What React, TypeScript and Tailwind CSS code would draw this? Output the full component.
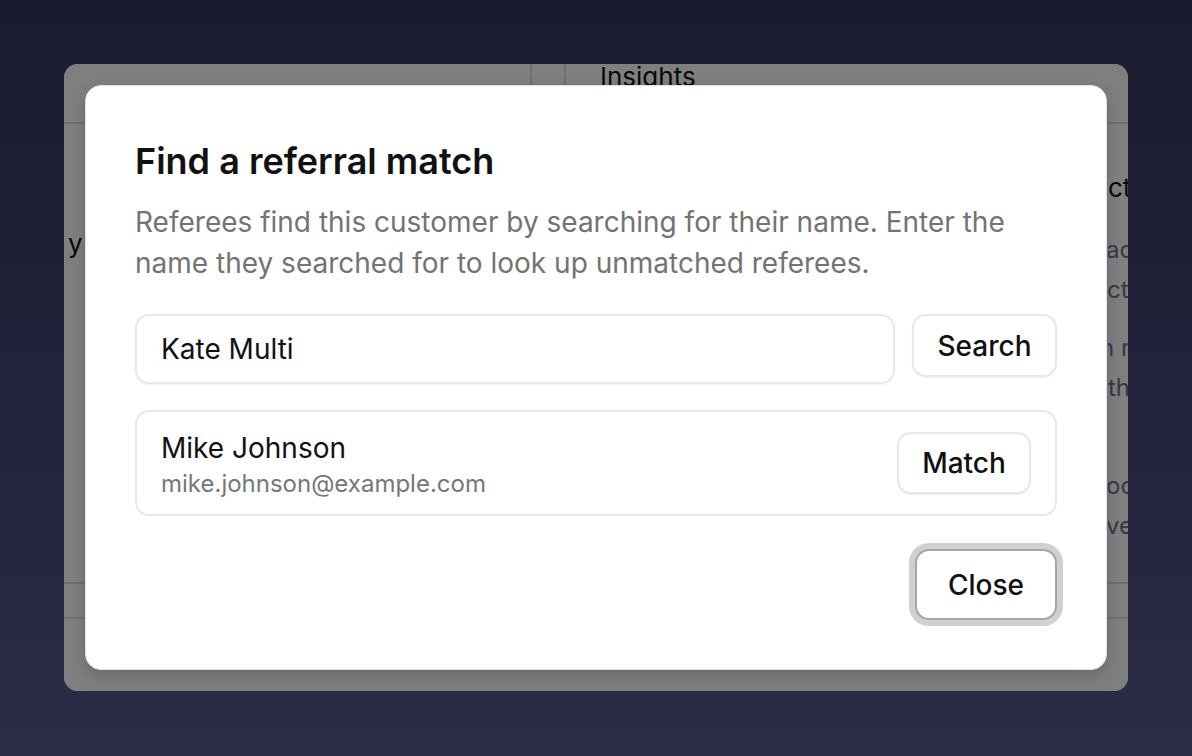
import React from "react";

export default function App() {
  const font = { fontFamily: "Inter, 'Noto Sans', sans-serif" };
  return (
    <div
      className="w-[1192px] h-[756px] p-[64px] bg-[linear-gradient(180deg,#1b1b2f_0%,#22233a_50%,#2b2c45_100%)]"
      style={font}
    >
      <div className="relative w-[1064px] h-[627px] rounded-[14px] overflow-hidden bg-white flex flex-col">
        {/* background app */}
        <div className="h-[60px] flex border-b-2 border-[#dedede] shrink-0">
          <div className="w-[468px] border-r-2 border-[#dedede]" />
          <div className="w-[34px] border-r-2 border-[#dedede]" />
          <div className="pl-[34px] text-[26px] text-[#111] leading-[26px]">Insights</div>
        </div>
        <div className="h-[458px] flex shrink-0">
          <div className="w-[1044px] pl-[4px] pt-[104px] text-[26px] text-[#111] leading-[32px]">y</div>
          <div className="flex-1 min-w-0 overflow-hidden whitespace-nowrap pt-[48px]">
            <div className="text-[26px] text-[#111] leading-[32px]">ctions</div>
            <div className="mt-[26px] text-[24px] text-[#70708f] leading-[40px] -ml-[2px]">account</div>
            <div className="text-[24px] text-[#70708f] leading-[40px] -ml-[1px]">ctive</div>
            <div className="mt-[18px] text-[24px] text-[#70708f] leading-[40px] -ml-[8px]">n referral</div>
            <div className="text-[24px] text-[#70708f] leading-[40px]">this</div>
            <div className="mt-[58px] text-[24px] text-[#70708f] leading-[40px] -ml-[2px]">ocess</div>
            <div className="text-[24px] text-[#70708f] leading-[40px] -ml-[2px]">verify</div>
          </div>
        </div>
        <div className="h-[35px] border-t-2 border-[#dedede] shrink-0" />
        <div className="flex-1 border-t-2 border-[#dedede]" />

        {/* overlay */}
        <div className="absolute inset-0 bg-black/50 p-[21px]">
          <div className="w-full h-full bg-white rounded-[16px] border border-[#e2e2e2] shadow-[0_6px_16px_rgba(0,0,0,0.18)] px-[49px] pt-[53px] pb-[49px] flex flex-col">
            <h2 className="text-[36px] font-semibold leading-[44px] text-[#111]">
              Find a referral match
            </h2>
            <p className="mt-[19px] text-[28px] leading-[41px] text-[#737373]">
              Referees find this customer by searching for their name. Enter the name they searched for to look up unmatched referees.
            </p>
            <div className="mt-[30px] flex gap-[17px] items-start">
              <div className="flex-1 h-[70px] rounded-[14px] border-2 border-[#e8e8e8] shadow-[0_1px_2px_rgba(0,0,0,0.06)] flex items-center px-[24px] text-[28px] text-[#111]">
                Kate Multi
              </div>
              <button className="w-[145px] h-[63px] rounded-[14px] border-2 border-[#e8e8e8] shadow-[0_1px_2px_rgba(0,0,0,0.06)] bg-white text-[28px] text-[#111] font-medium">
                Search
              </button>
            </div>
            <div className="mt-[26px] h-[106px] rounded-[14px] border-2 border-[#e8e8e8] flex items-center justify-between pl-[24px] pr-[24px]">
              <div className="flex flex-col pt-[4px]">
                <span className="text-[28px] leading-[36px] text-[#111]">Mike Johnson</span>
                <span className="mt-[2px] text-[24px] leading-[32px] text-[#777]">mike.johnson@example.com</span>
              </div>
              <button className="w-[134px] h-[62px] rounded-[14px] border-2 border-[#e8e8e8] shadow-[0_1px_2px_rgba(0,0,0,0.06)] bg-white text-[28px] text-[#111] font-medium">
                Match
              </button>
            </div>
            <div className="mt-[33px] flex justify-end">
              <button className="w-[142px] h-[71px] rounded-[14px] border-2 border-[#a6a6a6] ring-[6px] ring-[#d0d0d0] bg-white text-[28px] text-[#111] font-medium">
                Close
              </button>
            </div>
          </div>
        </div>
      </div>
    </div>
  );
}
